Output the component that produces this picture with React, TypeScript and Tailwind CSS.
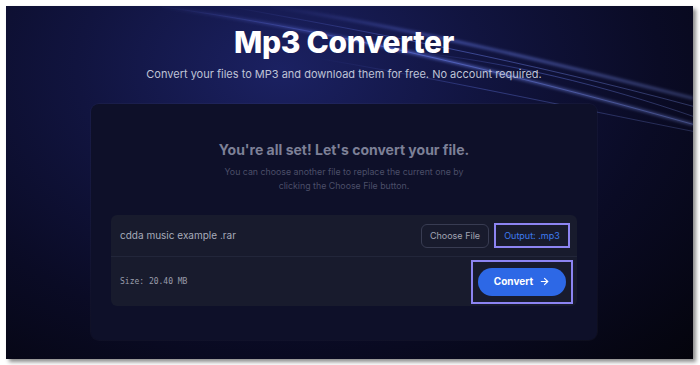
import { ArrowRight } from 'lucide-react'

const SANS = "font-['Inter','Noto_Sans',sans-serif]"

function Streaks() {
  return (
    <svg
      className="pointer-events-none absolute inset-0 h-full w-full"
      viewBox="0 0 687 352"
      preserveAspectRatio="none"
      aria-hidden
    >
      <defs>
        <linearGradient id="streak" x1="0" y1="0" x2="1" y2="0">
          <stop offset="0" stopColor="#6b7cff" stopOpacity="0" />
          <stop offset="0.45" stopColor="#6f86ff" stopOpacity="0.55" />
          <stop offset="1" stopColor="#8aa0ff" stopOpacity="0.35" />
        </linearGradient>
        <filter id="glow" x="-10%" y="-50%" width="120%" height="200%">
          <feGaussianBlur stdDeviation="1.6" />
        </filter>
      </defs>
      <g fill="none" stroke="url(#streak)">
        <path d="M150 0 C 300 20, 480 60, 687 118" strokeWidth="3" filter="url(#glow)" />
        <path d="M150 0 C 300 20, 480 60, 687 118" strokeWidth="0.8" />
        <path d="M220 0 C 360 25, 520 55, 687 100" strokeWidth="0.8" />
        <path d="M260 0 C 400 20, 560 60, 687 92" strokeWidth="2.5" filter="url(#glow)" />
        <path d="M310 52 C 420 70, 560 100, 687 125" strokeWidth="0.6" />
        <path d="M400 45 C 500 55, 600 80, 687 110" strokeWidth="0.7" />
      </g>
    </svg>
  )
}

export default function App() {
  return (
    <div className={`h-[365px] w-[700px] bg-white pl-[6px] pt-[6px] ${SANS}`}>
      <div className="relative flex h-[353px] w-[687px] flex-col items-center overflow-hidden bg-[radial-gradient(ellipse_at_40%_18%,#1b2162_0%,#11143f_35%,#0a0b25_65%,#04040c_100%)] pr-[11px] shadow-[3px_3px_4px_rgba(0,0,0,0.45)]">
        <Streaks />

        <h1 className="relative mt-[19px] text-[30px] font-extrabold leading-[34px] tracking-[-0.3px] text-white">
          Mp3 Converter
        </h1>
        <p className="relative mt-[8px] text-[11px] leading-[14px] text-[#bfc3d6]">
          Convert your files to MP3 and download them for free. No account required.
        </p>

        <section className="relative mt-[23px] w-[506px] rounded-[8px] bg-[#0e1029] px-[20px] pb-[34px] pt-[37px] shadow-[0_0_0_1px_rgba(255,255,255,0.03)]">
          <h2 className="text-center text-[14px] font-bold leading-[17px] text-[#7d8097]">
            You're all set! Let's convert your file.
          </h2>
          <p className="mx-auto mt-[7px] w-[250px] text-center text-[8.8px] leading-[14px] text-[#4b4e68]">
            You can choose another file to replace the current one by clicking the Choose File button.
          </p>

          <div className="mt-[22px] rounded-[6px] bg-[#181b2d]">
            <div className="flex h-[42px] items-center justify-between border-b border-[#22263a] pl-[9px] pr-[7px]">
              <span className="text-[10px] text-[#a7abba]">cdda music example .rar</span>
              <div className="flex items-center gap-[5px]">
                <button className="h-[24px] w-[68px] rounded-[6px] border border-[#383c52] text-[9px] text-[#a2a5b3]">
                  Choose File
                </button>
                <button className="h-[25px] w-[76px] border-2 border-[#8c84f2] text-[9px] text-[#3e7bf0]">
                  Output: .mp3
                </button>
              </div>
            </div>
            <div className="flex h-[49px] items-center justify-between pl-[9px] pr-[4px]">
              <span className="font-['DejaVu_Sans_Mono',monospace] text-[8px] text-[#9a9dab]">Size: 20.40 MB</span>
              <div className="border-2 border-[#8c84f2] px-[5px] py-[6px]">
                <button className="flex h-[28px] w-[88px] items-center justify-center gap-[6px] rounded-full bg-[#2d68e6] text-[10px] font-bold text-white">
                  Convert
                  <ArrowRight size={11} strokeWidth={2.5} />
                </button>
              </div>
            </div>
          </div>
        </section>
      </div>
    </div>
  )
}
